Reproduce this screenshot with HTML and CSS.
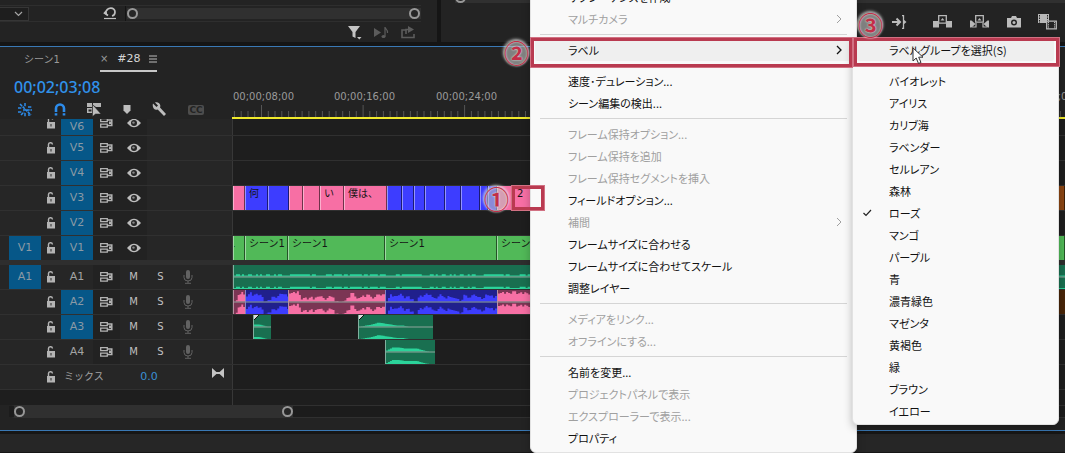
FILE: index.html
```html
<!DOCTYPE html>
<html lang="ja">
<head>
<meta charset="utf-8">
<title>タイムライン</title>
<link rel="stylesheet" href="styles.css">
</head>
<body>
<svg class="symbols" aria-hidden="true">
  <symbol id="lock" viewBox="0 0 10 12"><path d="M1 5h8v6.500H1z" fill="#b4b4b4"/><path d="M2.500 5V3a2 2 0 0 1 4-.5" fill="none" stroke="#b4b4b4" stroke-width="1.400"/><path d="M4.500 7h1v2.500h-1z" fill="#262626"/></symbol>
  <symbol id="sync" viewBox="0 0 13 10"><path d="M.7.7h6.600v3H.7zM.7 6.200h6.600v3H.7z" fill="none" stroke="#b4b4b4" stroke-width="1.300"/><path d="M7.500 2h4.300v5.500H7.500" fill="none" stroke="#b4b4b4" stroke-width="1.500"/><path d="M9 3.500h2v2.500H9z" fill="#b4b4b4"/></symbol>
  <symbol id="eye" viewBox="0 0 14 10"><path d="M0 5Q7-3.500 14 5Q7 13.500 0 5z" fill="#bdbdbd"/><circle cx="7" cy="5" r="3" fill="#262626"/><circle cx="6.500" cy="4.600" r="1.200" fill="#8a8a8a"/></symbol>
  <symbol id="mic" viewBox="0 0 10 14"><rect x="3" width="4" height="9" rx="2" fill="#626262"/><path d="M1 5v2.500a4 3.500 0 0 0 8 0V5M5 11v2M2 13.300h6" fill="none" stroke="#626262"/></symbol>
</svg>

<div class="app">
  <header class="upper">
    <section class="project">
      <div class="project-row">
        <button class="dropdown" aria-label="表示"><svg width="9" height="6"><path d="M1 1l3.500 3.500L8 1" fill="none" stroke="#a5a5a5" stroke-width="1.200"/></svg></button>
        <button class="undo" aria-label="元に戻す"><svg width="14" height="13"><path d="M4 6H1.500M4.500 2.500L1.500 6L5 8.500M2.500 6C4-.5 12 0 12 5c0 2-1 3.500-3 4" fill="none" stroke="#c0c0c0" stroke-width="1.700"/><path d="M1 11.500h12" stroke="#c0c0c0" stroke-width="1.200"/></svg></button>
        <div class="zoombar"><i class="knob"></i><i class="knob"></i></div>
      </div>
      <div class="project-tools">
        <button aria-label="フィルター"><svg width="14" height="15"><path d="M0 1h12L7.500 7v6l-3 -1.500V7zM9 12h4.500l-2.200 2.500z" fill="#c4c4c4"/></svg></button>
        <button aria-label="再生"><svg width="15" height="13"><path d="M0 2v9l7-4.500z" fill="#5c5c5c"/><ellipse cx="9.500" cy="10.500" rx="2" ry="1.600" fill="#5c5c5c"/><path d="M11 10.500V1c0 2 3 2 2.500 6" fill="none" stroke="#5c5c5c" stroke-width="1.200"/></svg></button>
        <button aria-label="書き出し"><svg width="15" height="13"><path d="M5 4H1v7.500h12V8M5 8V3.500h4" fill="none" stroke="#5c5c5c" stroke-width="1.600"/><path d="M7 0v7l6-3.500z" fill="#5c5c5c"/></svg></button>
      </div>
    </section>
    <section class="monitor">
      <div class="monitor-bar"><i class="knob"></i></div>
      <div class="monitor-tools">
        <button class="go-out" aria-label="アウトへ移動"><svg width="15" height="14"><path d="M0 7h7M4.500 3.500L8 7l-3.500 3.500" fill="none" stroke="#bcbcbc" stroke-width="2"/><path d="M10 .7h1.500V13.300H10" fill="none" stroke="#bcbcbc" stroke-width="1.300"/><path d="M11.500 4.500L14.500 7l-3 2.500z" fill="#bcbcbc"/></svg></button>
        <button aria-label="リフト"><svg width="20" height="13"><path d="M0 6h6v6.500H0zM13 6h6v6.500h-6z" fill="#b8b8b8"/><path d="M5.700.7h7.600v7.500H5.700z" fill="#232323" stroke="#b8b8b8" stroke-width="1.300"/><path d="M7.500 5.500l2-2.500l2 2.500z" fill="#b8b8b8"/></svg></button>
        <button aria-label="抽出"><svg width="20" height="13"><path d="M0 5.500h1.500L5.500 9l-4 3.500H0zM19 5.500h-1.500L13.500 9l4 3.500H19z" fill="#b8b8b8"/><path d="M2 12h4V8M17 12h-4V8" fill="none" stroke="#b8b8b8" stroke-width="1.200"/><path d="M5.700.7h7.600v6.500H5.700z" fill="#232323" stroke="#b8b8b8" stroke-width="1.300"/><path d="M7.500 5.500l2-2.500l2 2.500z" fill="#b8b8b8"/></svg></button>
        <button aria-label="フレームを書き出し"><svg width="14" height="12"><path d="M0 2h4l1-2h4l1 2h4v9.500H0z" fill="#bcbcbc"/><circle cx="7" cy="6.500" r="3" fill="#232323"/><circle cx="7" cy="6.500" r="1.500" fill="#bcbcbc"/></svg></button>
        <button aria-label="比較表示"><svg width="20" height="16"><path d="M0 0h11v9H0z" fill="#b8b8b8"/><path d="M1.500 1v8M9.500 1v8" stroke="#232323" stroke-dasharray="1.500 1"/><path d="M8.700 7.200h9.600v7.600H8.700z" fill="#232323" stroke="#b8b8b8" stroke-width="1.300"/><path d="M10.500 8v7M16.500 8v7" stroke="#b8b8b8" stroke-dasharray="1.200 1"/></svg></button>
      </div>
    </section>
  </header>

  <main class="timeline">
    <div class="tabs">
      <button class="tab">シーン1</button>
      <div class="tab active"><button aria-label="閉じる">×</button><button class="name">#28</button><button aria-label="パネルメニュー"><svg width="8" height="8"><path d="M0 1h8M0 4h8M0 7h8" stroke="#bdbdbd"/></svg></button></div>
    </div>
    <div class="head">
      <div class="controls">
        <div class="timecode">00;02;03;08</div>
        <div class="tools">
          <button aria-label="ネスト"><svg width="15" height="14"><path d="M7 0v4M7 10v4M0 5h4M0 9h4M10 4h4M2 1l11 11M5 7h9M3 12l3-3M11 10v3" fill="none" stroke="#2d8ceb" stroke-width="1.500" stroke-dasharray="3 .7"/></svg></button>
          <button aria-label="スナップ"><svg width="12" height="13"><path d="M2 9V5.500a4 4 0 0 1 8 0V9" fill="none" stroke="#2d8ceb" stroke-width="2.600"/><path d="M.7 10.200h2.600V12.500H.7zM8.700 10.200h2.600V12.500H8.700z" fill="#2d8ceb"/></svg></button>
          <button aria-label="リンクされた選択"><svg width="15" height="15"><path d="M0 1h5v4H0zM6 1h8v4H9L6 3zM0 6h5v5H0z" fill="#b5b5b5"/><path d="M1.500 7.500h3v2h-3z" fill="#232323"/><path d="M5.500 2.500v12l3-2.500h5.500z" fill="#bdbdbd" stroke="#232323" stroke-width=".5"/></svg></button>
          <button aria-label="マーカー"><svg width="8" height="11"><path d="M.5 1h7v5.500L4 10L.5 6.500z" fill="#bdbdbd"/></svg></button>
          <button aria-label="設定"><svg width="15" height="15"><path d="M1 1.500L4.500 5l1.500-1.500L3 .5C6-.5 9.500 2 8 5.500l6 6.500l-2 2l-6.300-6.500C2.500 9-.2 5 1 1.500z" fill="#bdbdbd"/></svg></button>
          <button class="cc">CC</button>
        </div>
      </div>
      <div class="ruler" id="ruler"></div>
    </div>
    <div class="tracks" id="tracks"></div>
    <div class="hscroll"><div class="range"><i class="knob"></i><i class="knob"></i></div></div>
  </main>
  <footer class="lower"></footer>
</div>

<nav class="menu context" aria-label="クリップメニュー">
  <button>サブシーケンスを作成</button>
  <button disabled>マルチカメラ<svg width="6" height="10"><path d="M1 1l4 4l-4 4" fill="none" stroke="currentColor"/></svg></button>
  <hr>
  <button class="current">ラベル<svg width="6" height="10"><path d="M1 1l4 4l-4 4" fill="none" stroke="currentColor" stroke-width="1.300"/></svg></button>
  <hr>
  <button>速度･デュレーション...</button>
  <button>シーン編集の検出...</button>
  <hr>
  <button disabled>フレーム保持オプション...</button>
  <button disabled>フレーム保持を追加</button>
  <button disabled>フレーム保持セグメントを挿入</button>
  <button>フィールドオプション...</button>
  <button disabled>補間<svg width="6" height="10"><path d="M1 1l4 4l-4 4" fill="none" stroke="currentColor"/></svg></button>
  <button>フレームサイズに合わせる</button>
  <button>フレームサイズに合わせてスケール</button>
  <button>調整レイヤー</button>
  <hr>
  <button disabled>メディアをリンク...</button>
  <button disabled>オフラインにする...</button>
  <hr>
  <button>名前を変更...</button>
  <button disabled>プロジェクトパネルで表示</button>
  <button disabled>エクスプローラーで表示...</button>
  <button>プロパティ</button>
</nav>

<nav class="menu labels" aria-label="ラベル">
  <button class="current">ラベルグループを選択(S)</button>
  <hr>
  <button>バイオレット</button>
  <button>アイリス</button>
  <button>カリブ海</button>
  <button>ラベンダー</button>
  <button>セルレアン</button>
  <button>森林</button>
  <button class="checked"><svg width="9" height="8"><path d="M.5 4l2.500 2.500l5-5.500" fill="none" stroke="#222" stroke-width="1.200"/></svg>ローズ</button>
  <button>マンゴ</button>
  <button>パープル</button>
  <button>青</button>
  <button>濃青緑色</button>
  <button>マゼンタ</button>
  <button>黄褐色</button>
  <button>緑</button>
  <button>ブラウン</button>
  <button>イエロー</button>
</nav>

<div class="frame frame-clip"></div>
<div class="frame frame-label"></div>
<div class="frame frame-group"></div>
<span class="badge badge-1">①</span>
<span class="badge badge-2">②</span>
<span class="badge badge-3">③</span>
<svg class="pointer" width="14" height="18"><path d="M1 1v13l3.200-3l2.300 5.500l2.500-1l-2.300-5.300H11z" fill="#fff" stroke="#333"/></svg>
<script src="app.js"></script>
</body>
</html>
```
FILE: styles.css
```css
* { box-sizing: border-box; }
body {
  margin: 0;
  background: #262626;
  color: #a3a3a3;
  font: 11px/16px "DejaVu Sans", "Noto Sans CJK JP", sans-serif;
  overflow: hidden;
}
button {
  display: flex;
  align-items: center;
  justify-content: center;
  margin: 0;
  padding: 0;
  border: 0;
  background: none;
  color: inherit;
  font: inherit;
}
svg { display: block; flex: none; }
.symbols { position: absolute; width: 0; height: 0; }
.app { display: flex; flex-direction: column; height: 100vh; }

.knob {
  width: 11px;
  height: 11px;
  border: 2px solid #989898;
  border-radius: 50%;
  background: #262626;
}

/* Upper panels */
.upper { display: flex; flex: none; height: 46px; gap: 4px; background: #151515; padding-bottom: 4px; }
.project { width: 437px; flex: none; background: #232323; padding-top: 5px; }
.project-row {
  display: flex;
  align-items: center;
  height: 17px;
  margin-right: 16px;
  border: solid #2e2e2e;
  border-width: 1px 0;
}
.dropdown {
  width: 29px;
  height: 14px;
  justify-content: flex-end;
  padding-right: 5px;
  background: #1e1e1e;
  border: 1px solid #363636;
  border-left: 0;
}
.undo { width: 97px; height: 15px; justify-content: flex-end; padding-right: 8px; border-right: 1px solid #141414; }
.zoombar { flex: 1; display: flex; justify-content: space-between; background: #303030; height: 11px; margin-left: 1px; padding-right: 1px; }
.project-tools { display: flex; gap: 12px; justify-content: flex-end; padding: 3px 21px 0 0; }
.monitor { flex: 1; background: #232323; }
.monitor-bar { height: 3px; margin-left: 14px; background: #303030; display: flex; align-items: flex-end; }
.monitor-tools { display: flex; gap: 17px; justify-content: flex-end; align-items: center; height: 37px; padding-right: 7px; }
.go-out { margin-right: 9px; }

/* Timeline panel */
.timeline {
  flex: 1;
  display: flex;
  flex-direction: column;
  border: solid #3a79b5;
  border-width: 1px 0;
  background: #232323;
}
.tabs { display: flex; height: 26px; padding-left: 24px; gap: 40px; font-size: 10px; }
.tab { height: 25px; color: #9a9a9a; }
.tab.active { display: flex; align-items: center; gap: 9px; border-bottom: 2px solid #c8c8c8; }
.tab .name { color: #d6d6d6; font-size: 11px; }
.head { display: flex; height: 46px; }
.controls { width: 232px; flex: none; }
.timecode { height: 29px; padding-left: 14px; color: #3091ea; font: 500 16px/29px "Noto Sans", sans-serif; }
.tools { display: flex; align-items: center; gap: 21px; padding-left: 18px; height: 15px; }
.cc { width: 16px; height: 10px; border-radius: 2px; background: #4d4d4d; color: #232323; font-size: 9px; font-weight: 700; }
.ruler { flex: 1; min-width: 0; overflow: hidden; display: flex; flex-direction: column; justify-content: flex-end; border-bottom: 2px solid #efe92c; }
.ruler-labels { display: flex; font-size: 10px; color: #9a9a9a; height: 16px; padding-left: 1px; }
.ruler-labels span { flex: none; width: 101px; }
.ruler-labels span:nth-child(even) { width: 102px; }

.tracks { flex: 1; display: flex; flex-direction: column; background: #1e1e1e; }
.track { display: flex; flex: none; height: 25px; border-bottom: 1px solid #303030; }
.track.partial { height: 17px; overflow: hidden; align-items: flex-end; }
.track.partial .heads { height: 24px; flex: none; align-items: end; }
.track.partial .on { height: 16px; }
.track.last-video { border-bottom: 5px solid #2e2e2e; height: 29px; }
.heads {
  width: 233px;
  flex: none;
  display: grid;
  grid-template-columns: 32px 20px 32px 27px 27px 27px 27px 1fr;
  padding-left: 9px;
  background: #262626;
  border-right: 1px solid #383838;
}
.heads > * { height: 100%; display: flex; align-items: center; justify-content: center; }
.heads .on { background: #065788; color: #8a9aa5; }
.heads .dark { background: #222; }
.heads .flag { color: #c0c0c0; font-size: 10px; }
.heads .mix { grid-column: 3 / 5; justify-content: flex-start; padding-left: 3px; font-size: 10px; }
.heads .gain { grid-column: 5 / 7; color: #3b8fd4; padding-left: 4px; }
.heads .keys { grid-column: 7 / 9; justify-content: flex-end; padding-right: 8px; align-items: flex-start; padding-top: 3px; }
.lane { flex: 1; min-width: 0; display: flex; overflow: hidden; }
.rest { flex: 1; display: flex; }
.rest .heads { background: #1e1e1e; }

.clip {
  flex: none;
  overflow: hidden;
  padding-left: 3px;
  border: solid rgba(255, 255, 255, .45);
  border-width: 0 0 0 1px;
  box-shadow: inset -1px 0 rgba(0, 0, 0, .55);
  color: #151515;
  font-size: 10px;
  white-space: nowrap;
}
.clip.grow { flex: 1; }
.clip.tail { text-indent: -8px; }
.clip.audio { padding: 0; box-shadow: none; }
.clip svg { width: 100%; height: 24px; }
.pink { background: #f76fa4; }
.blue { background: #3d3dff; }
.green { background: #51b958; }
.brown { background: #8b4513; }
.audio.pink { background: #7b3554; fill: #f76fa4; }
.audio.blue { background: #20208c; fill: #3d3dff; }
.audio.teal { background: #196f50; fill: #2bd39a; }
.audio.faded { background: linear-gradient(135deg, #ddd 3px, #111 3px, #111 4px, #196f50 4px); }
.audio.brown { background: #482508; fill: #8b4513; }

.hscroll { margin: 0 0 12px 9px; border: solid #303030; border-width: 1px 0; background: #1c1c1c; border-radius: 6px 0 0 6px; }
.range { width: 284px; display: flex; justify-content: space-between; background: #303030; border-left: 5px solid #1c1c1c; }
.lower { height: 22px; flex: none; background: #262626; border: solid #161616; border-width: 3px 0 1px; }

/* Menus */
.menu {
  position: absolute;
  display: flex;
  flex-direction: column;
  background: #f9f9f9;
  color: #111;
  font: 11px/22px "Noto Sans CJK JP", sans-serif;
  font-feature-settings: "palt";
  border: 1px solid #e2e2e2;
  border-radius: 6px;
  box-shadow: 0 3px 8px rgba(0, 0, 0, .25);
}
.menu button { height: 22px; justify-content: space-between; margin: 0 4px; padding: 0 10px 0 33px; border-radius: 3px; white-space: nowrap; }
.menu button:disabled { color: #a0a0a0; }
.menu hr { width: calc(100% - 18px); height: 1px; margin: 4px 9px; border: 0; background: #d5d5d5; }
.menu .current { background: #efefef; }
.context { left: 530px; top: -15px; width: 327px; padding-bottom: 3px; }
.labels { left: 852px; top: 37px; width: 207px; padding: 1px 0 2px; }
.labels button { padding-left: 32px; }
.menu .checked { justify-content: flex-start; gap: 17px; padding-left: 6px; }

/* Annotations */
.frame { position: absolute; border: 4px solid #b93a50; outline: 1px solid rgba(225, 150, 165, .6); outline-offset: -1px; }
.frame-clip { left: 511px; top: 185px; width: 34px; height: 26px; }
.frame-label { left: 530px; top: 37px; width: 323px; height: 31px; }
.frame-group { left: 853px; top: 37px; width: 207px; height: 30px; }
.badge {
  position: absolute;
  color: #c22f48;
  border-radius: 50%;
  width: 24px;
  height: 24px;
  text-align: center;
  background: rgba(190, 190, 190, .6);
  box-shadow: 0 0 3px 1px rgba(235, 235, 235, .7);
  text-shadow: 0 0 2px #fff;
  font: 700 25px/24px "Noto Sans CJK JP", sans-serif;
}
.badge-1 { left: 484px; top: 186px; }
.badge-2 { left: 504px; top: 40px; }
.badge-3 { left: 858px; top: 12px; }
.pointer { position: absolute; left: 912px; top: 47px; }
```
FILE: app.js
```js
const icon = (id, w, h) => `<svg width="${w}" height="${h}"><use href="#${id}"/></svg>`;

/* Clips: [width, colour, text]; width 0 fills the remaining lane. */
const edge = c => [70, c, ''];
const clips = {
  V3: [[12,'pink',''],[23,'blue','何'],[21,'blue',''],[14,'pink',''],[17,'pink',''],[24,'pink','い'],[43,'pink','僕は、'],
       [15,'blue',''],[12,'blue',''],[11,'blue',''],[20,'blue',''],[16,'blue',''],[19,'blue',''],[8,'blue',''],[9,'blue',''],[16,'pink',''],[0,'pink','2'],edge('brown')],
  V1: [[12,'green tail','1'],[43,'green','シーン1'],[97,'green','シーン1'],[112,'green','シーン1'],[0,'green','シーン1']],
  A1: [[0,'teal','flat']],
  A2: [[12,'pink','0 2 8 9 9 0'],[43,'blue','6 9 6 9 5 1 1 4 6 4 9 7 6'],[97,'pink','9 9 10 2 3 5 3 7 2 4 6 0 1 0 3 9 3 4 5 7 4 9 5 8'],
       [112,'blue','1 7 5 8 4 6 3 0 4 7 8 5 4 8 3 4 4 3 0 7 4 9 5 2 6 5 5 7'],[0,'pink','9 9 9 1 5 5 4 3 1 7 5 9 3 6 2 8 5 9 3 4 8 2 9 4 8 5 9 7 3 8 5 2 9 4 7'],edge('brown')],
  A3: [[20],[18,'teal faded','2 2 1 0 0'],[87],[75,'teal faded','0 1 2 4 3 2 1 1 0 0 0 0 0']],
  A4: [[152],[50,'teal','1 4 4 3 3 3 1 0 0']]
};

function wave(width, shape) {
  const w = width || (shape === 'flat' ? 832 : 492);
  const pts = shape === 'flat' ? null : shape.split(' ').map(Number);
  const rand = i => ((i * i * 7919 + i * 31 + 17) % 97) / 97;
  let d = '';
  for (const base of [11.5, 24]) {
    for (let x = 0; x < w; x += 2) {
      let h;
      if (!pts) h = rand(x) > .35 ? 2.2 : 1;
      else {
        const p = x / w * (pts.length - 1), i = Math.floor(p);
        h = pts[i] + ((pts[i + 1] ?? pts[i]) - pts[i]) * (p - i);
        if (h > .5 && Math.max(...pts) > 5) h += rand(x) * 3 - 1.5;
      }
      if (h > 0) d += `M${x} ${base}v${-Math.min(h, 11).toFixed(1)}h2V${base}z`;
    }
  }
  return `<svg viewBox="0 0 ${w} 24" preserveAspectRatio="none"><path d="${d}"/><path d="M0 11.500h${w}v1H0z" fill="#8fa69c"/></svg>`;
}

function lane(name) {
  return (clips[name] || []).map(([w, c, t]) => {
    const size = w ? `style="width:${w}px"` : '';
    if (!c) return `<div class="clip-gap" ${size}></div>`;
    const audio = name[0] === 'A';
    return `<div class="clip ${c} ${audio ? 'audio' : ''} ${w ? '' : 'grow'}" ${size}>${audio && t ? wave(w, t) : t}</div>`;
  }).join('');
}

function track(name, source, target) {
  const video = name[0] === 'V';
  const cls = name === 'V6' ? 'partial' : name === 'V1' ? 'last-video' : '';
  return `<div class="track ${cls}"><div class="heads">
    ${source ? `<button class="on">${name}</button>` : '<span></span>'}
    <button aria-label="ロック">${icon('lock', 10, 12)}</button>
    <button class="${target ? 'on' : ''}">${name}</button>
    <button class="dark" aria-label="同期ロック">${icon('sync', 13, 10)}</button>
    ${video ? `<button class="dark" aria-label="表示">${icon('eye', 14, 10)}</button>`
            : `<button class="flag">M</button><button class="flag">S</button><button aria-label="録音">${icon('mic', 10, 14)}</button>`}
  </div><div class="lane">${lane(name)}</div></div>`;
}

document.getElementById('tracks').innerHTML =
  ['V6', 'V5', 'V4', 'V3', 'V2', 'V1'].map(n => track(n, n === 'V1', true)).join('') +
  ['A1', 'A2', 'A3', 'A4'].map(n => track(n, n === 'A1', n === 'A2' || n === 'A3')).join('') +
  `<div class="track"><div class="heads"><span></span><button aria-label="ロック">${icon('lock', 10, 12)}</button>
   <span class="mix">ミックス</span><span class="gain">0.0</span>
   <button class="keys" aria-label="キーフレーム"><svg width="12" height="10"><path d="M0 0l5.500 5L0 10zM12 0L6.500 5l5.500 5z" fill="#c4c4c4"/><path d="M4 5h4" stroke="#c4c4c4" stroke-width="2"/></svg></button></div><div class="lane"></div></div>
   <div class="rest"><div class="heads"></div></div>`;

let ticks = '';
for (let i = -4; i < 300; i++) {
  const x = (29.5 + i * 6.77).toFixed(1);
  ticks += `M${x} ${i % 15 ? 6 : 0}V12`;
}
let labels = '';
for (let s = 8; s <= 72; s += 8) {
  labels += `<span>00;0${Math.floor(s / 60)};${String(s % 60).padStart(2, '0')};00</span>`;
}
document.getElementById('ruler').innerHTML =
  `<div class="ruler-labels">${labels}</div><svg width="2000" height="12"><path d="${ticks}" stroke="#555"/></svg>`;
```
